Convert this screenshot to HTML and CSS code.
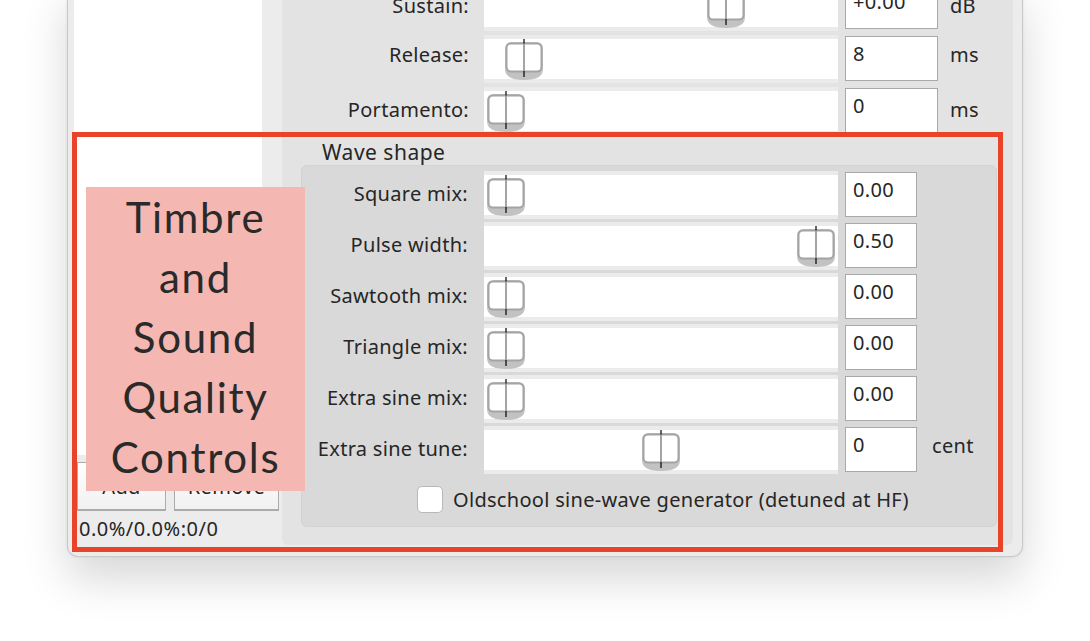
FILE: index.html
```html
<!DOCTYPE html>
<html>
<head>
<meta charset="utf-8">
<link rel="stylesheet" href="styles.css">
</head>
<body>
<svg class="defs" width="0" height="0">
  <symbol id="knob" viewBox="0 0 40 42">
    <path d="M1 10 Q1 3 8 3 H32 Q39 3 39 10 V30 Q39 41 20 41 Q1 41 1 30 Z" fill="#c2c2c2"/>
    <rect x="2.5" y="4.5" width="35" height="28" rx="4.5" fill="#fff" stroke="#a4a4a4" stroke-width="2"/>
    <line x1="20" y1="4" x2="20" y2="33" stroke="#a4a4a4" stroke-width="2"/>
    <line x1="20" y1="0" x2="20" y2="4.5" stroke="#000" stroke-width="1.2"/>
    <line x1="20" y1="32" x2="20" y2="38" stroke="#000" stroke-width="1.2"/>
  </symbol>
</svg>

<div class="window">
  <div class="sidebar">
    <div class="list"></div>
    <div class="btns">
      <button class="btn btn-add">Add</button>
      <button class="btn btn-remove">Remove</button>
    </div>
    <div class="status">0.0%/0.0%:0/0</div>
  </div>

  <div class="panel">
    <div class="rows rows-top">
      <div class="row">
        <div class="lbl">Sustain:</div>
        <div class="slider"><svg class="knob" style="left:222px"><use href="#knob"/></svg></div>
        <div class="num">+0.00</div>
        <div class="unit">dB</div>
      </div>
      <div class="row row-high">
        <div class="lbl">Release:</div>
        <div class="slider"><svg class="knob" style="left:20px"><use href="#knob"/></svg></div>
        <div class="num">8</div>
        <div class="unit">ms</div>
      </div>
      <div class="row">
        <div class="lbl">Portamento:</div>
        <div class="slider"><svg class="knob" style="left:2px"><use href="#knob"/></svg></div>
        <div class="num">0</div>
        <div class="unit">ms</div>
      </div>
    </div>

    <div class="group-title">Wave shape</div>
    <div class="group">
      <div class="rows rows-group">
        <div class="row">
          <div class="lbl">Square mix:</div>
          <div class="slider"><svg class="knob" style="left:2px"><use href="#knob"/></svg></div>
          <div class="num">0.00</div>
        </div>
        <div class="row">
          <div class="lbl">Pulse width:</div>
          <div class="slider"><svg class="knob" style="left:312px"><use href="#knob"/></svg></div>
          <div class="num">0.50</div>
        </div>
        <div class="row">
          <div class="lbl">Sawtooth mix:</div>
          <div class="slider"><svg class="knob" style="left:2px"><use href="#knob"/></svg></div>
          <div class="num">0.00</div>
        </div>
        <div class="row">
          <div class="lbl">Triangle mix:</div>
          <div class="slider"><svg class="knob" style="left:2px"><use href="#knob"/></svg></div>
          <div class="num">0.00</div>
        </div>
        <div class="row">
          <div class="lbl">Extra sine mix:</div>
          <div class="slider"><svg class="knob" style="left:2px"><use href="#knob"/></svg></div>
          <div class="num">0.00</div>
        </div>
        <div class="row">
          <div class="lbl">Extra sine tune:</div>
          <div class="slider"><svg class="knob" style="left:157px"><use href="#knob"/></svg></div>
          <div class="num">0</div>
          <div class="unit unit-cent">cent</div>
        </div>
      </div>
      <div class="check">
        <span class="box"></span>
        <span class="check-text">Oldschool sine-wave generator (detuned at HF)</span>
      </div>
    </div>
  </div>
</div>

<div class="annot-box"></div>
<div class="annot-label">Timbre<br>and<br>Sound<br>Quality<br>Controls</div>
</body>
</html>
```

FILE: styles.css
```css
* { box-sizing: border-box; }

html, body {
  margin: 0;
  padding: 0;
}

body {
  position: relative;
  width: 1090px;
  height: 641px;
  overflow: hidden;
  background: #ffffff;
  font-family: "Noto Sans", "Liberation Sans", sans-serif;
  font-size: 20px;
  letter-spacing: 0.3px;
  color: #262626;
}

.defs { position: absolute; width: 0; height: 0; }

.window {
  display: flex;
  width: 956px;
  margin: -18px 0 0 67px;
  padding: 0 9px 11px 6px;
  background: #ececec;
  border: 1px solid #c9c9c9;
  border-top: none;
  border-radius: 0 0 11px 11px;
  box-shadow: 0 22px 45px rgba(0, 0, 0, 0.16), 0 0 3px rgba(0, 0, 0, 0.08);
}

/* ---------- sidebar ---------- */
.sidebar {
  width: 208px;
  display: flex;
  flex-direction: column;
}

.list {
  flex: 1;
  width: 188px;
  background: #ffffff;
  margin-bottom: 7px;
}

.btns {
  display: flex;
  height: 49px;
  padding-left: 3px;
  gap: 8px;
}

.btn {
  height: 49px;
  font-family: inherit;
  font-size: 20px;
  letter-spacing: 0.3px;
  color: #262626;
  background: linear-gradient(#ffffff, #f1f1f1);
  border: 1px solid #ababab;
  border-bottom-width: 2px;
  border-radius: 0;
  padding: 0;
}

.btn-add { width: 89px; }
.btn-remove { width: 105px; }

.status {
  height: 34px;
  line-height: 36px;
  padding-left: 5px;
  letter-spacing: 0.5px;
  white-space: nowrap;
}

/* ---------- panel ---------- */
.panel {
  flex: 1;
  background: #e3e3e3;
  border-radius: 0 0 6px 6px;
  padding: 1px 0 18px 0;
}

.rows {
  display: flex;
  flex-direction: column;
}

.rows-top { gap: 4px; }
.rows-group { gap: 3px; }

.row {
  display: flex;
  align-items: center;
  height: 48px;
}

.lbl {
  text-align: right;
  white-space: nowrap;
  padding-bottom: 3px;
}

.rows-top .lbl { width: 187px; margin-right: 15px; }
.rows-group .lbl { width: 166px; margin-right: 16px; }

.row-high .lbl,
.row-high .unit { padding-bottom: 10px; }

.slider {
  position: relative;
  width: 354px;
  height: 48px;
  padding: 4px 0;
  background: #ebebeb;
}

.slider::before {
  content: "";
  display: block;
  height: 40px;
  background: #ffffff;
}

.knob {
  position: absolute;
  top: 4px;
  width: 40px;
  height: 42px;
}

.num {
  align-self: flex-start;
  margin: 1px 0 0 7px;
  height: 45px;
  border: 1px solid #a9a9a9;
  background: #ffffff;
  padding: 4px 7px 0;
  line-height: 26px;
}

.rows-top .num { width: 93px; }
.rows-group .num { width: 72px; }

.unit { white-space: nowrap; padding-bottom: 3px; }
.rows-top .unit { margin-left: 12px; }
.rows-group .unit { margin-left: 15px; }
.unit-cent { padding-bottom: 10px; }

.group-title {
  height: 30px;
  line-height: 34px;
  padding-left: 40px;
  font-size: 21px;
  letter-spacing: 0.5px;
}

.group {
  margin: 0 16px 0 19px;
  background: #d9d9d9;
  border: 1px solid #d3d3d3;
  border-radius: 6px;
  padding: 5px 0 7px;
}

.check {
  display: flex;
  align-items: center;
  height: 40px;
  margin-top: 5px;
  padding-left: 115px;
  gap: 10px;
}

.box {
  width: 26px;
  height: 27px;
  background: #ffffff;
  border: 1px solid #b8b8b8;
  border-radius: 5px;
}

/* ---------- annotation overlays ---------- */
.annot-box {
  position: absolute;
  left: 72px;
  top: 132px;
  width: 931px;
  height: 420px;
  border: 5px solid #e9442a;
}

.annot-label {
  position: absolute;
  left: 86px;
  top: 187px;
  width: 219px;
  height: 304px;
  background: #f4b7b1;
  color: #2a2a2a;
  font-family: "Lato", "Noto Sans", sans-serif;
  font-weight: 400;
  font-size: 42px;
  letter-spacing: 1.7px;
  line-height: 60px;
  text-align: center;
  padding-top: 0;
}
```
